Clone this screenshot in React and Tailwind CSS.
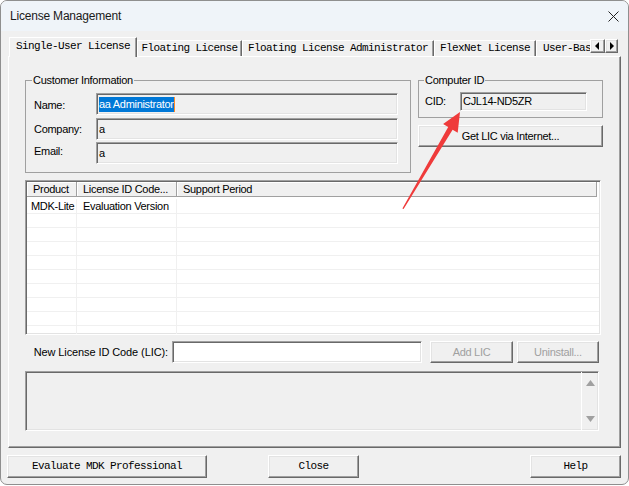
import React from "react";

const raised =
  "border border-t-white border-l-white border-r-[#696969] border-b-[#696969] shadow-[inset_-1px_-1px_0_#a0a0a0,inset_1px_1px_0_#e3e3e3] bg-[#f0f0f0]";
const sunken =
  "border border-t-[#a0a0a0] border-l-[#a0a0a0] border-b-white border-r-white shadow-[inset_1px_1px_0_#696969,inset_-1px_-1px_0_#e3e3e3]";
const mono = "font-['Liberation_Mono',monospace] text-[11px] tracking-[-0.6px]";

const tabs = [
  { label: "Floating License", w: "w-[105px]" },
  { label: "Floating License Administrator", w: "w-[192px]" },
  { label: "FlexNet License", w: "w-[102px]" },
];

function Field({ children, className = "" }) {
  return <div className={`${sunken} flex items-center pl-[2px] ${className}`}>{children}</div>;
}

function Triangle({ dir }) {
  return (
    <svg width="5" height="8" viewBox="0 0 5 8">
      {dir === "left" ? <polygon points="4,0 4,8 0,4" fill="#000" /> : <polygon points="1,0 1,8 5,4" fill="#000" />}
    </svg>
  );
}

export default function App() {
  const rows = Array.from({ length: 10 });

  return (
    <div className="relative w-[629px] h-[486px] bg-white font-['Liberation_Sans',Arial,sans-serif] text-[11px] tracking-[-0.3px] text-black">
      <div className="flex flex-col w-[629px] h-[485px] border border-[#8f8f8f] rounded-[7px] bg-[#f0f0f0] overflow-hidden">
        {/* title bar */}
        <div className="flex items-center justify-between h-[30px] px-[9px] bg-[#eff4f9] text-[12px] tracking-[-0.2px] text-[#1a1a1a]">
          <span>License Management</span>
          <svg width="11" height="11" viewBox="0 0 11 11">
            <path d="M0.5 0.5 L10.5 10.5 M10.5 0.5 L0.5 10.5" stroke="#222" strokeWidth="1" />
          </svg>
        </div>

        {/* tab strip */}
        <div className={`flex items-end h-[19px] mt-[6px] ml-[8px] ${mono}`}>
          <div className="relative z-10 -mb-px flex items-center justify-center w-[128px] h-[20px] pb-[2px] bg-[#f0f0f0] border-t border-l border-r border-t-white border-l-white border-r-[#696969] shadow-[inset_-1px_0_0_#a0a0a0]">
            Single-User License
          </div>
          {tabs.map((t) => (
            <div
              key={t.label}
              className={`flex items-center justify-center ${t.w} h-[16px] border-t border-l border-r border-t-white border-l-white border-r-[#696969] shadow-[inset_-1px_0_0_#a0a0a0]`}
            >
              {t.label}
            </div>
          ))}
          <div className="w-[54px] h-[16px] flex items-center pl-[6px] whitespace-nowrap border-t border-l border-t-white border-l-white">
            User-Bas
          </div>
          <div className="flex mb-[3px]">
            <div className={`${raised} w-[15px] h-[14px] flex items-center justify-center`}>
              <Triangle dir="left" />
            </div>
            <div className={`${raised} w-[13px] h-[14px] flex items-center justify-center`}>
              <Triangle dir="right" />
            </div>
          </div>
        </div>

        {/* tab panel */}
        <div className="ml-[7px] w-[613px] h-[392px] border border-t-white border-l-white border-r-[#696969] border-b-[#696969] shadow-[inset_-1px_-1px_0_#a0a0a0] pt-[17px] pl-[16px]">
          <div className="flex items-start gap-[7px]">
            <fieldset className="w-[386px] h-[99px] m-0 border border-[#a0a0a0] pl-[8px] pr-[11px]">
              <legend className="ml-[-2px] px-[1px] leading-[13px]">Customer Information</legend>
              <div className="flex flex-col mt-[6px]">
                <div className="flex items-center h-[22px]">
                  <span className="w-[62px] mt-[2px]">Name:</span>
                  <Field className="w-[302px] h-[22px] bg-[#f0f0f0]">
                    <span className="bg-[#0078d7] text-white leading-[15px]">aa Administrator</span>
                    <span className="w-px h-[15px] bg-[#ff8a28]" />
                  </Field>
                </div>
                <div className="flex items-center h-[22px] mt-[3px]">
                  <span className="w-[62px]">Company:</span>
                  <Field className="w-[302px] h-[22px] bg-[#f0f0f0]">a</Field>
                </div>
                <div className="flex items-center h-[22px] mt-[2px]">
                  <span className="w-[62px] -mt-[3px]">Email:</span>
                  <Field className="w-[302px] h-[22px] bg-[#f0f0f0]">a</Field>
                </div>
              </div>
            </fieldset>

            <div className="flex flex-col w-[185px]">
              <fieldset className="w-[185px] h-[44px] m-0 border border-[#a0a0a0] pl-[6px]">
                <legend className="ml-[-1px] px-[1px] leading-[13px]">Computer ID</legend>
                <div className="flex items-center mt-[5px]">
                  <span className="w-[35px]">CID:</span>
                  <Field className="w-[127px] h-[19px] bg-[#f0f0f0]">CJL14-ND5ZR</Field>
                </div>
              </fieldset>
              <button className={`${raised} mt-[7px] w-[185px] h-[22px] flex items-center justify-center`}>
                Get LIC via Internet...
              </button>
            </div>
          </div>

          {/* list view */}
          <div className={`${sunken} mt-[7px] w-[576px] h-[155px] bg-white p-[1px] overflow-hidden flex flex-col`}>
            <div className="flex h-[15px] shrink-0">
              {[
                ["Product", "w-[50px]"],
                ["License ID Code...", "w-[100px]"],
                ["Support Period", "w-[420px]"],
              ].map(([h, w]) => (
                <div
                  key={h}
                  className={`${w} flex items-center pl-[6px] bg-[#f0f0f0] border-r border-b border-[#a0a0a0] shadow-[inset_1px_1px_0_white] whitespace-nowrap`}
                >
                  {h}
                </div>
              ))}
            </div>
            {rows.map((_, i) => (
              <div key={i} className={`flex shrink-0 border-b border-[#f0f0f0] ${i === 0 ? "h-[17px] pt-[2px]" : "h-[14px]"}`}>
                <div className="w-[50px] border-r border-[#f0f0f0] pl-[4px] flex items-center whitespace-nowrap">
                  {i === 0 ? "MDK-Lite" : ""}
                </div>
                <div className="w-[100px] border-r border-[#f0f0f0] pl-[6px] flex items-center whitespace-nowrap">
                  {i === 0 ? "Evaluation Version" : ""}
                </div>
                <div className="flex-1" />
              </div>
            ))}
          </div>

          {/* new LIC row */}
          <div className="flex items-center h-[22px] mt-[6px]">
            <span className="w-[147px] text-right pr-[4px] tracking-[-0.1px]">New License ID Code (LIC):</span>
            <div className={`${sunken} w-[250px] h-[22px] bg-white`} />
            <button className={`${raised} ml-[8px] w-[83px] h-[22px] text-[#a0a0a0]`}>Add LIC</button>
            <button className={`${raised} ml-[4px] w-[82px] h-[22px] text-[#a0a0a0]`}>Uninstall...</button>
          </div>

          {/* message area */}
          <div className={`${sunken} mt-[8px] w-[574px] h-[60px] bg-[#f0f0f0] flex justify-end`}>
            <div className="w-[17px] h-full border-l border-white flex flex-col items-center justify-between py-[8px]">
              <svg width="9" height="6" viewBox="0 0 9 6">
                <polygon points="4.5,0 9,6 0,6" fill="#a0a0a0" />
              </svg>
              <svg width="9" height="6" viewBox="0 0 9 6">
                <polygon points="0,0 9,0 4.5,6" fill="#a0a0a0" />
              </svg>
            </div>
          </div>
        </div>

        {/* bottom buttons */}
        <div className={`flex h-[23px] mt-[7px] pl-[6px] ${mono}`}>
          <button className={`${raised} w-[200px] h-[23px]`}>Evaluate MDK Professional</button>
          <button className={`${raised} ml-[61px] w-[91px] h-[23px]`}>Close</button>
          <button className={`${raised} ml-auto mr-[7px] w-[91px] h-[23px]`}>Help</button>
        </div>
      </div>

      {/* annotation arrow */}
      <svg className="absolute left-0 top-0 pointer-events-none" width="629" height="486" viewBox="0 0 629 486">
        <polygon
          points="460,112 457.7,132.7 452.6,129.7 403.6,209 402.4,208.4 448.2,127.1 443.1,124.1"
          fill="#ef3b3b"
        />
      </svg>
    </div>
  );
}
